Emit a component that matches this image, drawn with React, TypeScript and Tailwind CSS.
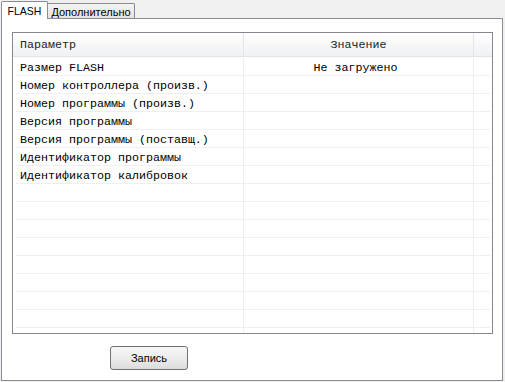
import React from "react";

const rows = [
  ["Размер FLASH", "Не загружено"],
  ["Номер контроллера (произв.)", ""],
  ["Номер программы (произв.)", ""],
  ["Версия программы", ""],
  ["Версия программы (поставщ.)", ""],
  ["Идентификатор программы", ""],
  ["Идентификатор калибровок", ""],
];

export default function App() {
  const all = [...rows];
  while (all.length < 16) all.push(["", ""]);
  return (
    <div
      className="w-[505px] h-[382px] bg-[#f0f0f0] overflow-hidden"
      style={{ fontFamily: '"Liberation Sans", Arial, sans-serif' }}
    >
      {/* tab strip */}
      <div className="relative z-10 flex items-end h-[18px] pl-[1px]">
        <div className="relative top-[1px] h-[18px] w-[47px] bg-white border border-b-0 border-[#898c95] rounded-t-[2px] flex items-start justify-center pt-[3px] text-[10.5px] text-black leading-[12px]">
          FLASH
        </div>
        <div className="h-[15px] w-[87px] bg-gradient-to-b from-[#f4f4f4] to-[#e3e3e3] border border-l-0 border-b-0 border-[#898c95] rounded-tr-[2px] flex items-start justify-center pt-[2px] text-[11px] text-black leading-[12px]">
          Дополнительно
        </div>
      </div>

      {/* panel */}
      <div className="ml-[1px] w-[502px] h-[363px] border border-[#898c95] bg-white pt-[13px] pl-[10px]">
        <div
          className="w-[481px] h-[302px] border border-[#828790] bg-white overflow-hidden text-[11.67px] text-black"
          style={{ fontFamily: '"Liberation Mono", "Courier New", monospace' }}
        >
          {/* header */}
          <div className="flex h-[24px] border-b border-[#e2e3e5] bg-gradient-to-b from-white to-[#f0f1f3]">
            <div className="w-[231px] border-r border-[#e3e4e6] flex items-center pl-[7px] pt-[3px] text-[#222]">
              Параметр
            </div>
            <div className="w-[230px] border-r border-[#e3e4e6] flex items-center justify-center pt-[3px] text-[#222]">
              Значение
            </div>
            <div className="flex-1" />
          </div>
          <div className="pt-[1px]">
            {all.map((r, i) => (
              <div key={i} className="relative flex h-[18px]">
                <div className="w-[231px] border-r border-[#eeeeee] flex items-center pl-[7px] pt-[3px] whitespace-pre">
                  {r[0]}
                </div>
                <div className="w-[230px] border-r border-[#eeeeee] flex items-center justify-center pr-[6px] pt-[3px] whitespace-pre">
                  {r[1]}
                </div>
                <div className="flex-1" />
                <div className="absolute left-[3px] right-[2px] bottom-0 h-[1px] bg-[#efefef]" />
              </div>
            ))}
          </div>
        </div>
        <button className="mt-[12px] ml-[98px] w-[78px] h-[24px] rounded-[3px] border border-[#707070] bg-gradient-to-b from-[#f6f6f6] via-[#ececec] to-[#dcdcdc] text-[11px] text-black flex items-center justify-center">
          Запись
        </button>
      </div>
    </div>
  );
}
